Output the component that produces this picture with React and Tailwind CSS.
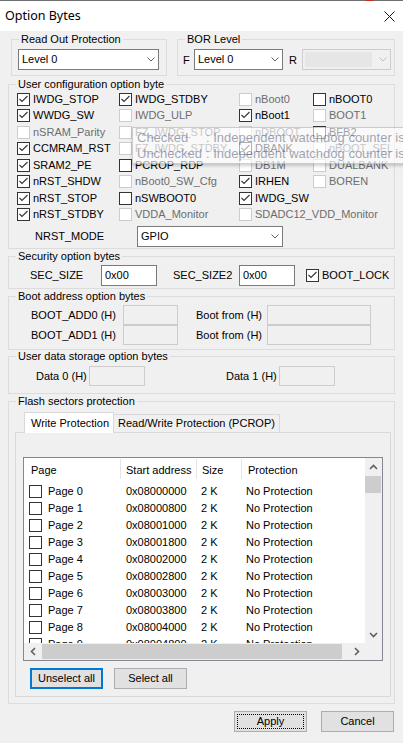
import React from "react";

function Chevron({ color = "#606060", className = "" }) {
  return (
    <svg width="8" height="5" viewBox="0 0 8 5" className={className}>
      <path d="M0.5 0.5 L4 4 L7.5 0.5" fill="none" stroke={color} strokeWidth="1" />
    </svg>
  );
}

function Box({ checked, disabled }) {
  return (
    <span
      className={
        disabled
          ? "flex h-[13px] w-[13px] shrink-0 items-center justify-center border border-[#cccccc] bg-white"
          : "flex h-[13px] w-[13px] shrink-0 items-center justify-center border border-[#333333] bg-white"
      }
    >
      {checked && (
        <svg width="11" height="11" viewBox="0 0 11 11" className="block">
          <path
            d="M1.5 5 L4 7.5 L9.5 2"
            fill="none"
            stroke={disabled ? "#bcbcbc" : "#333333"}
            strokeWidth="1.1"
          />
        </svg>
      )}
    </span>
  );
}

function Check({ label, checked, disabled }) {
  return (
    <div className="flex items-center">
      <Box checked={checked} disabled={disabled} />
      <span className={disabled ? "ml-[3px] whitespace-nowrap text-[#6d6d6d]" : "ml-[3px] whitespace-nowrap text-black"}>
        {label}
      </span>
    </div>
  );
}

function Group({ title, className, inner = "", children }) {
  return (
    <fieldset className={"border border-[#dcdcdc] " + className}>
      <legend className="ml-[7px] px-[2px] text-[11px] leading-[13px]">{title}</legend>
      <div className={inner}>{children}</div>
    </fieldset>
  );
}

function Combo({ value, className }) {
  return (
    <div className={"flex h-[21px] items-center border border-[#7a7a7a] bg-white " + className}>
      <span className="flex-1 pl-[3px] whitespace-nowrap">{value}</span>
      <Chevron className="mr-[3px]" />
    </div>
  );
}

function Field({ value, className }) {
  return (
    <div className={"flex items-center border border-[#7a7a7a] bg-white pl-[3px] " + className}>
      {value}
    </div>
  );
}

function DisabledField({ className }) {
  return <div className={"border border-[#cccccc] bg-[#f0f0f0] " + className} />;
}

const userRows = [
  [["IWDG_STOP", 1, 0], ["IWDG_STDBY", 1, 0], ["nBoot0", 0, 1], ["nBOOT0", 0, 0]],
  [["WWDG_SW", 1, 0], ["IWDG_ULP", 0, 1], ["nBoot1", 1, 0], ["BOOT1", 0, 1]],
  [["nSRAM_Parity", 0, 1], ["FZ_IWDG_STOP", 0, 1], ["nDBOOT", 0, 1], ["BFB2", 0, 0]],
  [["CCMRAM_RST", 1, 0], ["FZ_IWDG_STDBY", 0, 1], ["DBANK", 1, 0], ["nBOOT_SEL", 0, 1]],
  [["SRAM2_PE", 1, 0], ["PCROP_RDP", 0, 0], ["DB1M", 0, 1], ["DUALBANK", 0, 1]],
  [["nRST_SHDW", 1, 0], ["nBoot0_SW_Cfg", 0, 1], ["IRHEN", 1, 0], ["BOREN", 0, 1]],
  [["nRST_STOP", 1, 0], ["nSWBOOT0", 0, 0], ["IWDG_SW", 1, 0], null],
  [["nRST_STDBY", 1, 0], ["VDDA_Monitor", 0, 1], ["SDADC12_VDD_Monitor", 0, 1], null],
];

const pages = Array.from({ length: 10 }, (_, i) => ({
  name: "Page " + i,
  addr: "0x" + (0x08000000 + i * 0x800).toString(16).toUpperCase().padStart(8, "0"),
}));

function ArrowIcon({ dir }) {
  const d = {
    up: "M1 5 L4.5 1.5 L8 5",
    down: "M1 1 L4.5 4.5 L8 1",
    left: "M5 1 L1.5 4.5 L5 8",
    right: "M1 1 L4.5 4.5 L1 8",
  }[dir];
  const vertical = dir === "up" || dir === "down";
  return (
    <svg width={vertical ? 9 : 6} height={vertical ? 6 : 9} viewBox={vertical ? "0 0 9 6" : "0 0 6 9"}>
      <path d={d} fill="none" stroke="#606060" strokeWidth="1.6" />
    </svg>
  );
}

function HeaderCell({ label, className, pad }) {
  return (
    <div className={"flex h-full " + className}>
      <span className={"flex-1 self-center whitespace-nowrap " + pad}>{label}</span>
      <span className="mt-[1px] h-[20px] w-px bg-[#e5e5e5]" />
    </div>
  );
}

export default function App() {
  return (
    <div className="relative h-[743px] w-[403px] overflow-hidden bg-[#f0f0f0] font-['Liberation_Sans',Arial,sans-serif] text-[11px] leading-[13px] text-black">
      {/* top edge */}
      <div className="flex h-px">
        <div className="w-[366px] bg-[#707070]" />
        <div className="w-[7px] bg-[#c42b1c]" />
        <div className="flex-1 bg-[#707070]" />
      </div>
      {/* title bar */}
      <div className="flex h-[30px] items-center justify-between bg-white pl-[5px] pr-[8px]">
        <span className="font-['Noto_Sans',sans-serif] text-[12.5px] leading-[16px]">Option Bytes</span>
        <svg width="11" height="11" viewBox="0 0 11 11">
          <path d="M0.5 0.5 L10.5 10.5 M10.5 0.5 L0.5 10.5" stroke="#111" strokeWidth="1" />
        </svg>
      </div>

      <div className="pl-[8px] pt-[2px]">
        {/* row 1 */}
        <div className="flex">
          <Group title="Read Out Protection" className="ml-[3px] h-[43px] w-[156px]" inner="pl-[6px] pt-[3px]">
            <Combo value="Level 0" className="w-[141px]" />
          </Group>
          <Group title="BOR Level" className="ml-[10px] h-[43px] w-[218px]" inner="pl-[5px] pt-[3px]">
            <div className="flex items-start">
              <span className="mt-[5px] w-[11px]">F</span>
              <Combo value="Level 0" className="w-[89px]" />
              <span className="ml-[6px] mt-[5px] w-[13px]">R</span>
              <div className="flex h-[21px] w-[89px] items-center border border-[#cccccc] bg-[#f0f0f0] pl-[2px]">
                <div className="h-[15px] w-[67px] bg-[#e6e6e6]" />
                <div className="flex flex-1 justify-end pr-[3px]">
                  <Chevron color="#c0c0c0" />
                </div>
              </div>
            </div>
          </Group>
        </div>

        {/* user configuration */}
        <Group title="User configuration option byte" className="mt-[2px] h-[171px] w-[387px]" inner="pl-[8px]">
          <div className="grid grid-cols-[102px_120px_74px_1fr]">
            {userRows.map((row, r) =>
              row.map((c, i) => (
                <div key={r + "-" + i} className="flex h-[16.5px] items-center">
                  {c && <Check label={c[0]} checked={!!c[1]} disabled={!!c[2]} />}
                </div>
              ))
            )}
          </div>
          <div className="mt-[3px] flex h-[21px] items-center">
            <span className="ml-[18px] w-[102px]">NRST_MODE</span>
            <Combo value="GPIO" className="w-[146px]" />
          </div>
        </Group>

        {/* security */}
        <Group title="Security option bytes" className="mt-[1px] h-[39px] w-[387px]" inner="pl-[21px] pt-[2px]">
          <div className="flex h-[21px] items-center">
            <span className="w-[71px]">SEC_SIZE</span>
            <Field value="0x00" className="h-[21px] w-[56px]" />
            <span className="ml-[16px] w-[66px]">SEC_SIZE2</span>
            <Field value="0x00" className="h-[21px] w-[56px]" />
            <div className="ml-[11px]">
              <Check label="BOOT_LOCK" checked />
            </div>
          </div>
        </Group>

        {/* boot address */}
        <Group title="Boot address option bytes" className="mt-[1px] h-[60px] w-[387px]" inner="pl-[22px] pt-[2px]">
          {["BOOT_ADD0 (H)", "BOOT_ADD1 (H)"].map((l) => (
            <div key={l} className="flex h-[20px] items-center">
              <span className="w-[92px]">{l}</span>
              <DisabledField className="h-[20px] w-[55px]" />
              <span className="ml-[18px] w-[71px]">Boot from (H)</span>
              <DisabledField className="h-[20px] w-[104px]" />
            </div>
          ))}
        </Group>

        {/* user data */}
        <Group title="User data storage option bytes" className="h-[44px] w-[387px]" inner="pl-[27px] pt-[3px]">
          <div className="flex h-[20px] items-center">
            <span className="w-[53px]">Data 0 (H)</span>
            <DisabledField className="h-[20px] w-[56px]" />
            <span className="ml-[81px] w-[53px]">Data 1 (H)</span>
            <DisabledField className="h-[20px] w-[56px]" />
          </div>
        </Group>

        {/* flash */}
        <Group title="Flash sectors protection" className="mt-[1px] h-[309px] w-[387px]">
          <div className="relative z-10 -mb-px ml-[15px] mt-[4px] flex h-[21px] items-end">
            <div className="flex h-[21px] w-[90px] items-center border border-b-0 border-[#d9d9d9] bg-white pl-[6px]">
              Write Protection
            </div>
            <div className="flex h-[19px] w-[166px] items-center border border-l-0 border-[#d9d9d9] bg-[#f0f0f0] pl-[4px]">
              Read/Write Protection (PCROP)
            </div>
          </div>
          <div className="ml-[6px] h-[265px] w-[376px] border border-[#d9d9d9] pl-[7px]">
            {/* list view */}
            <div className="mt-[24px] flex h-[204px] w-[360px] border border-[#828790] bg-white">
              <div className="flex w-[341px] flex-col">
                <div className="flex h-[25px] shrink-0">
                  <HeaderCell label="Page" className="w-[97px]" pad="pl-[7px]" />
                  <HeaderCell label="Start address" className="w-[76px]" pad="pl-[5px]" />
                  <HeaderCell label="Size" className="w-[45px]" pad="pl-[5px]" />
                  <div className="flex flex-1 items-center pl-[6px]">Protection</div>
                </div>
                <div className="h-[160px] shrink-0 overflow-hidden">
                  {pages.map((p) => (
                    <div key={p.name} className="flex h-[17px] items-center whitespace-nowrap">
                      <div className="flex w-[97px] items-center pl-[5px]">
                        <Box />
                        <span className="ml-[6px]">{p.name}</span>
                      </div>
                      <div className="w-[76px] pl-[5px]">{p.addr}</div>
                      <div className="w-[45px] pl-[4px]">2 K</div>
                      <div className="pl-[4px]">No Protection</div>
                    </div>
                  ))}
                </div>
                <div className="flex h-[17px] shrink-0 items-center bg-[#f0f0f0]">
                  <div className="flex h-[17px] w-[17px] items-center justify-center">
                    <ArrowIcon dir="left" />
                  </div>
                  <div className="ml-[1px] h-[15px] w-[300px] bg-[#cdcdcd]" />
                  <div className="flex-1" />
                  <div className="flex h-[17px] w-[17px] items-center justify-center">
                    <ArrowIcon dir="right" />
                  </div>
                </div>
              </div>
              <div className="flex w-[17px] flex-col bg-[#f0f0f0]">
                <div className="flex h-[17px] items-center justify-center">
                  <ArrowIcon dir="up" />
                </div>
                <div className="mt-[1px] h-[17px] w-[16px] bg-[#cdcdcd]" />
                <div className="flex-1" />
                <div className="mb-[17px] flex h-[17px] items-center justify-center">
                  <ArrowIcon dir="down" />
                </div>
              </div>
            </div>
            <div className="ml-[7px] mt-[7px] flex">
              <button className="flex h-[21px] w-[73px] items-center justify-center border-2 border-[#0078d7] bg-[#e1e1e1]">
                Unselect all
              </button>
              <button className="ml-[11px] flex h-[21px] w-[73px] items-center justify-center border border-[#adadad] bg-[#e1e1e1]">
                Select all
              </button>
            </div>
          </div>
        </Group>
      </div>

      {/* dialog buttons */}
      <div className="mt-[7px] flex justify-end gap-[14px] pr-[9px]">
        <button className="h-[21px] w-[73px] border border-[#adadad] bg-[#e1e1e1] p-[2px]">
          <div className="flex h-full w-full items-center justify-center border border-dotted border-black">Apply</div>
        </button>
        <button className="flex h-[21px] w-[73px] items-center justify-center border border-[#adadad] bg-[#e1e1e1]">
          Cancel
        </button>
      </div>

      {/* tooltip */}
      <div className="absolute left-[132px] top-[127px] h-[37px] w-[300px] border border-[rgba(118,118,118,0.35)] bg-[rgba(255,255,255,0.62)] pl-[4px] pt-[2px] font-['Liberation_Sans',Arial,sans-serif] text-[13px] leading-[16px] text-[rgba(70,74,110,0.5)] shadow-[0_2px_3px_rgba(0,0,0,0.18)]">
        <div className="whitespace-nowrap">
          <span className="inline-block w-[69px]">Checked</span>: Independent watchdog counter is frozen in Stop mode
        </div>
        <div className="whitespace-nowrap">
          <span className="inline-block w-[69px]">Unchecked</span>: Independent watchdog counter is running in Stop mode
        </div>
      </div>
    </div>
  );
}
